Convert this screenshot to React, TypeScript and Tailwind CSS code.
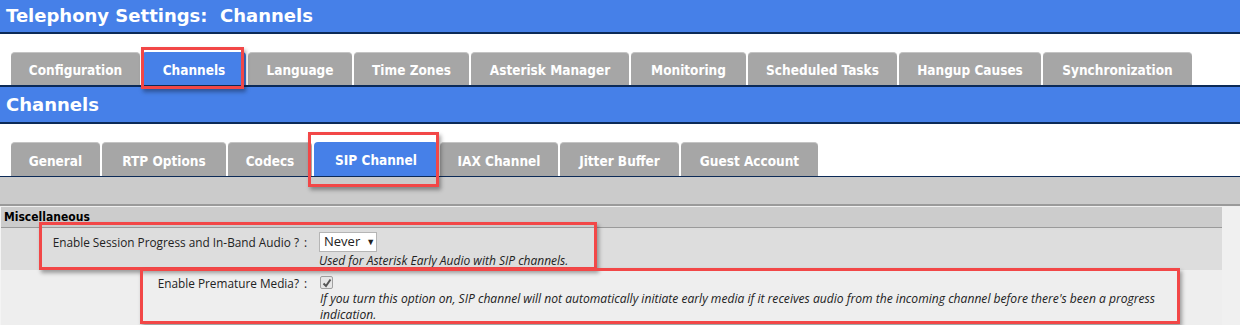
const mainTabs = [
  { label: 'Configuration', w: 'w-[129px]' },
  { label: 'Channels', w: 'w-[104px]', active: true },
  { label: 'Language', w: 'w-[104px]' },
  { label: 'Time Zones', w: 'w-[115px]' },
  { label: 'Asterisk Manager', w: 'w-[158px]' },
  { label: 'Monitoring', w: 'w-[115px]' },
  { label: 'Scheduled Tasks', w: 'w-[149px]' },
  { label: 'Hangup Causes', w: 'w-[142px]' },
  { label: 'Synchronization', w: 'w-[149px]' },
];

const subTabs = [
  { label: 'General', w: 'w-[89px]' },
  { label: 'RTP Options', w: 'w-[124px]' },
  { label: 'Codecs', w: 'w-[84px]' },
  { label: 'SIP Channel', w: 'w-[124px]', active: true },
  { label: 'IAX Channel', w: 'w-[118px]' },
  { label: 'Jitter Buffer', w: 'w-[119px]' },
  { label: 'Guest Account', w: 'w-[137px]' },
];

const tahoma = "font-['DejaVu_Sans_Condensed','DejaVu_Sans',sans-serif]";
const verdana = "font-['DejaVu_Sans',sans-serif]";
const segoe = "font-['Open_Sans','Noto_Sans',sans-serif]";

function Tab({ label, w, active, h }: { label: string; w: string; active?: boolean; h: string }) {
  return (
    <div
      className={`${w} ${h} flex items-center justify-center pt-[3px] rounded-t-[4px] text-[13.5px] font-bold text-white ${tahoma} ${
        active ? 'bg-[#4680e8]' : 'bg-[#a6a6a6] border-t border-[#c4c4c4]'
      }`}
    >
      {label}
    </div>
  );
}

function Callout({ className }: { className: string }) {
  // red annotation rectangles drawn over the screenshot
  return (
    <div
      className={`absolute border-[3px] border-[#f24747] shadow-[2px_3px_4px_rgba(0,0,0,0.35)] pointer-events-none ${className}`}
    />
  );
}

function Checkbox() {
  return (
    <div className="w-[13px] h-[13px] border border-[#a0a0a0] bg-[#e6e6e6] rounded-[2px] flex items-center justify-center">
      <svg width="10" height="10" viewBox="0 0 10 10">
        <path d="M1.5 5.5 L4 8 L8.5 1.5" fill="none" stroke="#555" strokeWidth="2" />
      </svg>
    </div>
  );
}

export default function App() {
  return (
    <div className="relative w-[1240px] h-[325px] overflow-hidden bg-white">
      {/* page header */}
      <div className="h-[34px] bg-[#4680e8] border-b-2 border-[#0c2a57] pl-[6px] flex items-center">
        <h1 className={`text-[18px] font-bold text-white whitespace-pre pb-[2px] ${verdana}`}>
          Telephony Settings:  Channels
        </h1>
      </div>

      {/* main tabs */}
      <div className="pt-[18px] pl-[11px] flex gap-[2px] border-b-2 border-[#0c2a57]">
        {mainTabs.map((t) => (
          <Tab key={t.label} {...t} h="h-[33px]" />
        ))}
      </div>

      {/* section header */}
      <div className="h-[37px] bg-[#4680e8] border-b-2 border-[#0c2a57] pl-[6px] flex items-center">
        <h2 className={`text-[18px] font-bold text-white ${verdana}`}>Channels</h2>
      </div>

      {/* sub tabs */}
      <div className="pt-[18px] pl-[11px] flex gap-[2px] border-b border-[#0c2a57]">
        {subTabs.map((t) => (
          <Tab key={t.label} {...t} h="h-[34px]" />
        ))}
      </div>

      <div className="h-[29px] bg-[#cbcbcb] border-b-2 border-[#9a9a9a]" />

      {/* settings table */}
      <div className="bg-[#f0f0f0] pt-[1px] h-[200px]">
        <div className="w-[1222px] border-l border-[#f4f4f4]">
          <div className={`h-[21px] bg-[#cccccc] border-b border-[#9a9a9a] pl-[3px] flex items-center text-[12px] font-bold text-black ${tahoma}`}>
            Miscellaneous
          </div>

          <div className={`h-[42px] bg-[#dddddd] flex text-[11.8px] text-[#222] ${segoe}`}>
            <div className="w-[298px] text-right pt-[4px] leading-[20px]">Enable Session Progress and In-Band Audio ?</div>
            <div className="w-[20px] pl-[5px] pt-[4px] leading-[20px]">:</div>
            <div className="pt-[4px]">
              <div className="w-[58px] h-[20px] bg-white border border-[#b5b5b5] flex items-center pl-[4px] gap-[6px] text-[13px]">
                <span>Never</span>
                <span className="text-[9px]">▼</span>
              </div>
              <div className="italic leading-[17px] text-[12px]">Used for Asterisk Early Audio with SIP channels.</div>
            </div>
          </div>

          <div className={`h-[60px] bg-[#eeeeee] flex text-[11.8px] text-[#222] ${segoe}`}>
            <div className="w-[298px] text-right pt-[3px] leading-[20px]">Enable Premature Media?</div>
            <div className="w-[20px] pl-[5px] pt-[3px] leading-[20px]">:</div>
            <div className="pt-[6px] pl-[1px]">
              <Checkbox />
              <div className="italic leading-[16px] text-[12.1px] pt-[2px]">
                If you turn this option on, SIP channel will not automatically initiate early media if it receives audio from the incoming channel before there's been a progress
                <br />
                indication.
              </div>
            </div>
          </div>
        </div>
      </div>

      <Callout className="left-[141px] top-[47px] w-[103px] h-[42px]" />
      <Callout className="left-[308px] top-[132px] w-[131px] h-[55px]" />
      <Callout className="left-[39px] top-[222px] w-[558px] h-[48px]" />
      <Callout className="left-[140px] top-[268px] w-[1040px] h-[56px]" />
    </div>
  );
}
